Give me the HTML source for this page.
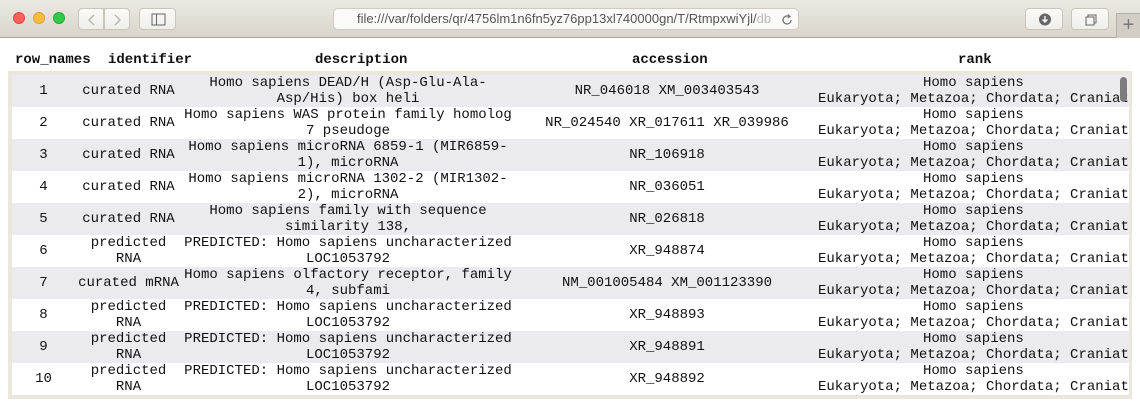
<!DOCTYPE html>
<html><head><style>
*{margin:0;padding:0;box-sizing:border-box}
body{width:1140px;height:410px;overflow:hidden;background:#fff;font-family:"Liberation Mono",monospace;font-size:14px;color:#111;position:relative}
.tb{position:absolute;left:0;top:0;width:1140px;height:38px;background:linear-gradient(#ece9e2,#d9d5cc);border-bottom:1px solid #aaa69d}
.dot{position:absolute;top:12px;width:12px;height:12px;border-radius:50%}
.btn{position:absolute;top:8px;height:22px;background:linear-gradient(#fbfaf8,#f0eee9);border:1px solid #c9c5bc;border-radius:4px}
.url{position:absolute;left:333px;top:8px;width:466px;height:22px;background:#fbfaf8;border:1px solid #cfcbc2;border-radius:5px;font-family:"Liberation Sans",sans-serif;font-size:13px;color:#555;line-height:20px;padding-left:23px;white-space:nowrap;overflow:hidden}
.hd{position:absolute;top:52px;font-weight:bold;line-height:16px}
.box{position:absolute;left:8px;top:71px;width:1124px;height:328px;border:4px solid #ebe7dc;border-right-width:3px;overflow:hidden;background:#fff}
table{border-collapse:collapse;table-layout:fixed;width:1200px}
td{height:32px;padding:0;text-align:center;line-height:16px;vertical-align:middle;white-space:pre;overflow:visible}
tr:nth-child(odd){background:#ebebef}
td.r{text-align:left;position:relative}
td.r span{display:block}
td.r span:first-child{padding-left:103px}
td.r span+span{margin-left:-2px}
.sb{position:absolute;left:1120px;top:77px;width:7px;height:25px;border-radius:4px;background:#7d7d7d}
</style></head><body>
<div class="tb">
<div class="dot" style="left:13px;background:#fc605c;border:1px solid #de4a45"></div>
<div class="dot" style="left:33px;background:#fdbc40;border:1px solid #dea033"></div>
<div class="dot" style="left:53px;background:#34c84a;border:1px solid #27aa36"></div>
<div class="btn" style="left:78px;width:26px;border-radius:4px 0 0 4px"><svg width="26" height="22"><path d="M15 6l-5 5 5 5" stroke="#b8b4ac" fill="none" stroke-width="1.3"/></svg></div>
<div class="btn" style="left:104px;width:26px;border-radius:0 4px 4px 0"><svg width="26" height="22"><path d="M10 6l5 5-5 5" stroke="#b8b4ac" fill="none" stroke-width="1.3"/></svg></div>
<div class="btn" style="left:139px;width:37px"><svg width="37" height="22"><rect x="12" y="5" width="13" height="11" fill="none" stroke="#666" stroke-width="1"/><line x1="16.5" y1="5" x2="16.5" y2="16" stroke="#666"/></svg></div>
<div class="url">file:///var/folders/qr/4756lm1n6fn5yz76pp13xl740000gn/T/RtmpxwiYjl/<span style="color:#bbb">db</span><svg style="position:absolute;left:446px;top:4px" width="14" height="14"><path d="M11 7a4 4 0 1 1-2-3.5" stroke="#777" fill="none" stroke-width="1.3"/><path d="M8 1.5l2 2-2.3 1.5" stroke="#777" fill="none" stroke-width="1.2"/></svg></div>
<div class="btn" style="left:1025px;width:38px"><svg width="38" height="22"><circle cx="19" cy="10.5" r="6" fill="#666"/><path d="M19 7v6M16.5 10.5l2.5 2.5 2.5-2.5" stroke="#fff" fill="none" stroke-width="1.4"/></svg></div>
<div class="btn" style="left:1071px;width:38px"><svg width="38" height="22"><rect x="14" y="8" width="8" height="8" fill="none" stroke="#666"/><path d="M16 8V6h8v8h-2" fill="none" stroke="#666"/></svg></div>
<div style="position:absolute;left:1116px;top:13px;width:24px;height:25px;background:#d2cec5;border-left:1px solid #b5b1a8;border-top:1px solid #b5b1a8;color:#777;font-family:'Liberation Sans',sans-serif;font-size:20px;text-align:center;line-height:22px">+</div>
</div>
<div class="hd" style="left:15px">row_names</div>
<div class="hd" style="left:108px">identifier</div>
<div class="hd" style="left:315px">description</div>
<div class="hd" style="left:632px">accession</div>
<div class="hd" style="left:958px">rank</div>
<div class="box"><table>
<colgroup><col style="width:63px"><col style="width:107px"><col style="width:332px"><col style="width:306px"><col style="width:392px"></colgroup>
<tr><td>1</td><td>curated RNA</td><td>Homo sapiens DEAD/H (Asp-Glu-Ala-
Asp/His) box heli</td><td>NR_046018 XM_003403543</td><td class="r"><span>Homo sapiens</span><span>Eukaryota; Metazoa; Chordata; Craniat</span></td></tr>
<tr><td>2</td><td>curated RNA</td><td>Homo sapiens WAS protein family homolog
7 pseudoge</td><td>NR_024540 XR_017611 XR_039986</td><td class="r"><span>Homo sapiens</span><span>Eukaryota; Metazoa; Chordata; Craniat</span></td></tr>
<tr><td>3</td><td>curated RNA</td><td>Homo sapiens microRNA 6859-1 (MIR6859-
1), microRNA</td><td>NR_106918</td><td class="r"><span>Homo sapiens</span><span>Eukaryota; Metazoa; Chordata; Craniat</span></td></tr>
<tr><td>4</td><td>curated RNA</td><td>Homo sapiens microRNA 1302-2 (MIR1302-
2), microRNA</td><td>NR_036051</td><td class="r"><span>Homo sapiens</span><span>Eukaryota; Metazoa; Chordata; Craniat</span></td></tr>
<tr><td>5</td><td>curated RNA</td><td>Homo sapiens family with sequence
similarity 138,</td><td>NR_026818</td><td class="r"><span>Homo sapiens</span><span>Eukaryota; Metazoa; Chordata; Craniat</span></td></tr>
<tr><td>6</td><td>predicted
RNA</td><td>PREDICTED: Homo sapiens uncharacterized
LOC1053792</td><td>XR_948874</td><td class="r"><span>Homo sapiens</span><span>Eukaryota; Metazoa; Chordata; Craniat</span></td></tr>
<tr><td>7</td><td>curated mRNA</td><td>Homo sapiens olfactory receptor, family
4, subfami</td><td>NM_001005484 XM_001123390</td><td class="r"><span>Homo sapiens</span><span>Eukaryota; Metazoa; Chordata; Craniat</span></td></tr>
<tr><td>8</td><td>predicted
RNA</td><td>PREDICTED: Homo sapiens uncharacterized
LOC1053792</td><td>XR_948893</td><td class="r"><span>Homo sapiens</span><span>Eukaryota; Metazoa; Chordata; Craniat</span></td></tr>
<tr><td>9</td><td>predicted
RNA</td><td>PREDICTED: Homo sapiens uncharacterized
LOC1053792</td><td>XR_948891</td><td class="r"><span>Homo sapiens</span><span>Eukaryota; Metazoa; Chordata; Craniat</span></td></tr>
<tr><td>10</td><td>predicted
RNA</td><td>PREDICTED: Homo sapiens uncharacterized
LOC1053792</td><td>XR_948892</td><td class="r"><span>Homo sapiens</span><span>Eukaryota; Metazoa; Chordata; Craniat</span></td></tr>
</table></div>
<div class="sb"></div>
</body></html>
